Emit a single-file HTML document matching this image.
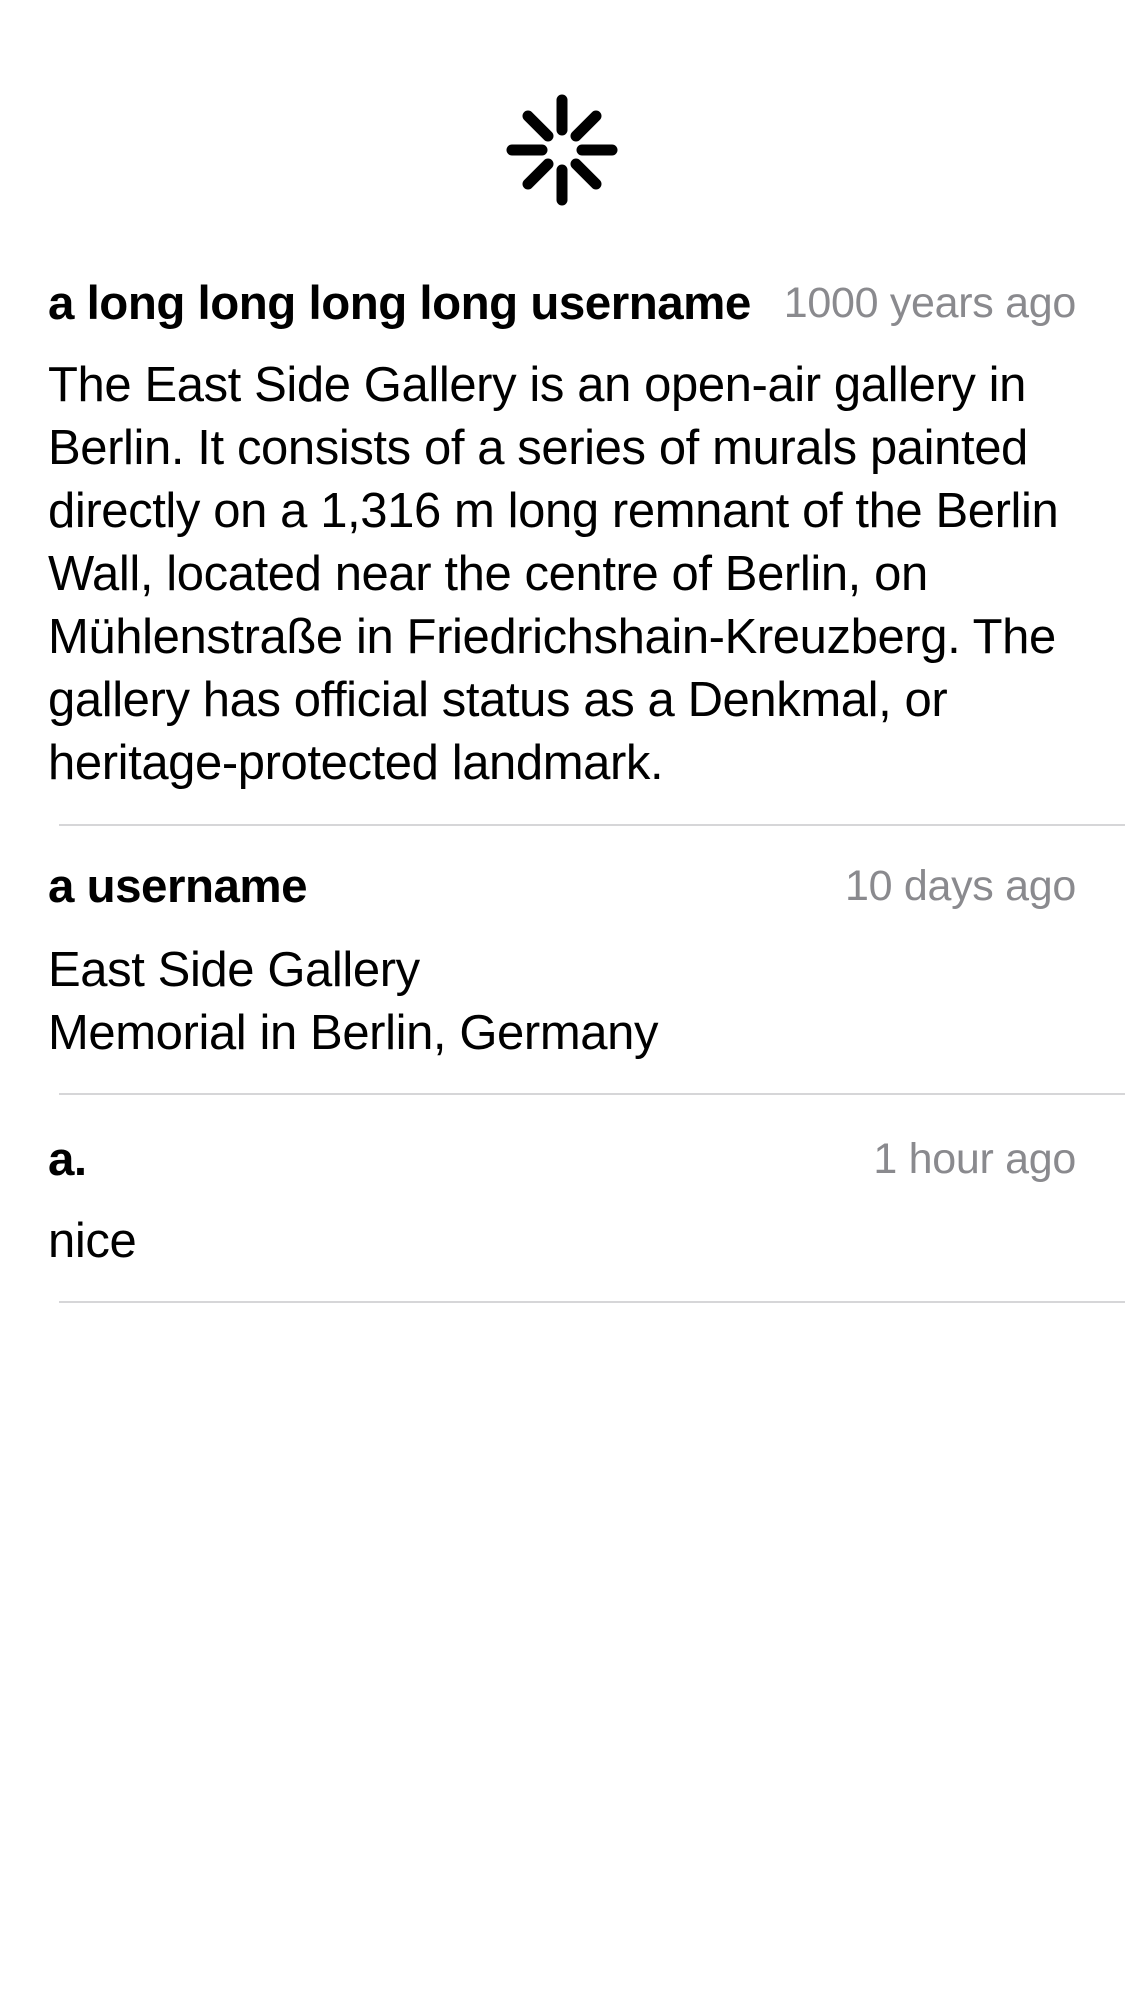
<!DOCTYPE html>
<html><head><meta charset="utf-8"><style>
html,body{margin:0;padding:0;background:#fff;}
body{width:1125px;height:2001px;position:relative;overflow:hidden;font-family:"Liberation Sans",sans-serif;color:#000;}
.t{position:absolute;white-space:nowrap;line-height:1;}
.u{font-weight:bold;font-size:47.5px;left:48px;letter-spacing:-0.5px;}
.g{color:#8a8a8e;font-size:43px;right:49px;letter-spacing:-0.3px;}
.b{font-size:49px;left:48px;letter-spacing:-0.4px;}
.sep{position:absolute;left:59px;right:0;height:2px;background:#d6d6d8;}
</style></head><body>
<svg style="position:absolute;left:502px;top:90px" width="120" height="120" viewBox="-60 -60 120 120">
<g stroke="#000" stroke-width="11" stroke-linecap="round">
<line x1="0" y1="-20" x2="0" y2="-50"/>
<line x1="0" y1="20" x2="0" y2="50"/>
<line x1="-20" y1="0" x2="-50" y2="0"/>
<line x1="20" y1="0" x2="50" y2="0"/>
<line x1="14" y1="-14" x2="34" y2="-34"/>
<line x1="-14" y1="-14" x2="-34" y2="-34"/>
<line x1="14" y1="14" x2="34" y2="34"/>
<line x1="-14" y1="14" x2="-34" y2="34"/>
</g></svg>

<div class="t u" style="top:280px">a long long long long username</div>
<div class="t g" style="top:282px">1000 years ago</div>
<div class="t b" style="top:361px">The East Side Gallery is an open-air gallery in</div>
<div class="t b" style="top:424px">Berlin. It consists of a series of murals painted</div>
<div class="t b" style="top:487px">directly on a 1,316 m long remnant of the Berlin</div>
<div class="t b" style="top:550px">Wall, located near the centre of Berlin, on</div>
<div class="t b" style="top:613px">Mühlenstraße in Friedrichshain-Kreuzberg. The</div>
<div class="t b" style="top:676px">gallery has official status as a Denkmal, or</div>
<div class="t b" style="top:739px">heritage-protected landmark.</div>
<div class="sep" style="top:824px"></div>

<div class="t u" style="top:863px">a username</div>
<div class="t g" style="top:865px">10 days ago</div>
<div class="t b" style="top:946px">East Side Gallery</div>
<div class="t b" style="top:1009px">Memorial in Berlin, Germany</div>
<div class="sep" style="top:1093px"></div>

<div class="t u" style="top:1136px">a.</div>
<div class="t g" style="top:1138px">1 hour ago</div>
<div class="t b" style="top:1217px">nice</div>
<div class="sep" style="top:1301px"></div>
</body></html>
